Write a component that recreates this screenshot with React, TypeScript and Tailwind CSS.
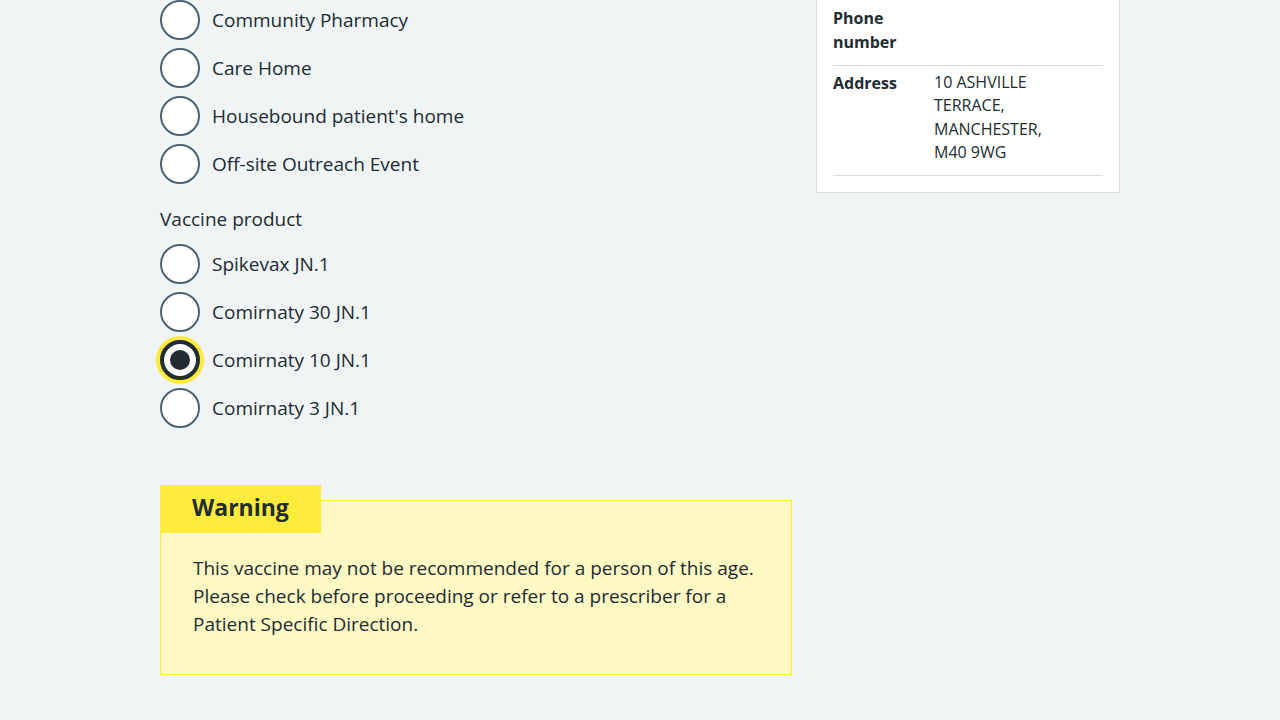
const font = { fontFamily: '"Open Sans", "Liberation Sans", sans-serif' };

const settings = ["Community Pharmacy", "Care Home", "Housebound patient's home", "Off-site Outreach Event"];
const products = ["Spikevax JN.1", "Comirnaty 30 JN.1", "Comirnaty 10 JN.1", "Comirnaty 3 JN.1"];

function Radio({ label, checked }: { label: string; checked?: boolean }) {
  return (
    <div className="mb-2 flex h-10 items-center">
      {checked ? (
        <span className="flex h-10 w-10 shrink-0 items-center justify-center rounded-full border-4 border-[#212b32] bg-white shadow-[0_0_0_4px_#ffeb3b]">
          <span className="h-5 w-5 rounded-full bg-[#212b32]" />
        </span>
      ) : (
        <span className="h-10 w-10 shrink-0 rounded-full border-2 border-[#4c6272] bg-white" />
      )}
      <span className="ml-3 text-[19px] leading-7 text-[#212b32]">{label}</span>
    </div>
  );
}

export default function App() {
  return (
    <div className="min-h-[720px] bg-[#f0f4f5] text-[#212b32]" style={font}>
      <div className="mx-auto flex w-[960px] gap-6">
        <main className="w-[632px] shrink-0">
          {settings.map((s) => (
            <Radio key={s} label={s} />
          ))}
          <p className="mb-[11px] mt-[21px] text-[19px] leading-7">Vaccine product</p>
          {products.map((p) => (
            <Radio key={p} label={p} checked={p === "Comirnaty 10 JN.1"} />
          ))}

          <section className="mt-[72px] border border-[#ffeb3b] bg-[#fff9c4] px-8 pb-[36px]">
            <h3 className="-ml-[33px] -mt-[16px] block w-fit bg-[#ffeb3b] px-8 pb-[10px] pt-[6px] text-[23px] font-bold leading-8">
              Warning
            </h3>
            <p className="mt-[21px] text-[19px] leading-7">
              This vaccine may not be recommended for a person of this age. Please check before proceeding or refer to a
              prescriber for a Patient Specific Direction.
            </p>
          </section>
        </main>

        <aside className="w-[304px] shrink-0">
          <div className="-mt-px border border-[#d8dde0] bg-white px-4 pb-4">
            <dl className="text-[16px] leading-6">
              <div className="flex border-b border-[#d8dde0] pb-[11px] pt-[6px]">
                <dt className="w-[101px] font-bold">Phone number</dt>
                <dd className="w-[135px]" />
              </div>
              <div className="flex border-b border-[#d8dde0] pb-[11px] pt-[5px]">
                <dt className="w-[101px] font-bold">Address</dt>
                <dd className="w-[135px] leading-[23.3px]">10 ASHVILLE TERRACE, MANCHESTER, M40 9WG</dd>
              </div>
            </dl>
          </div>
        </aside>
      </div>
    </div>
  );
}
